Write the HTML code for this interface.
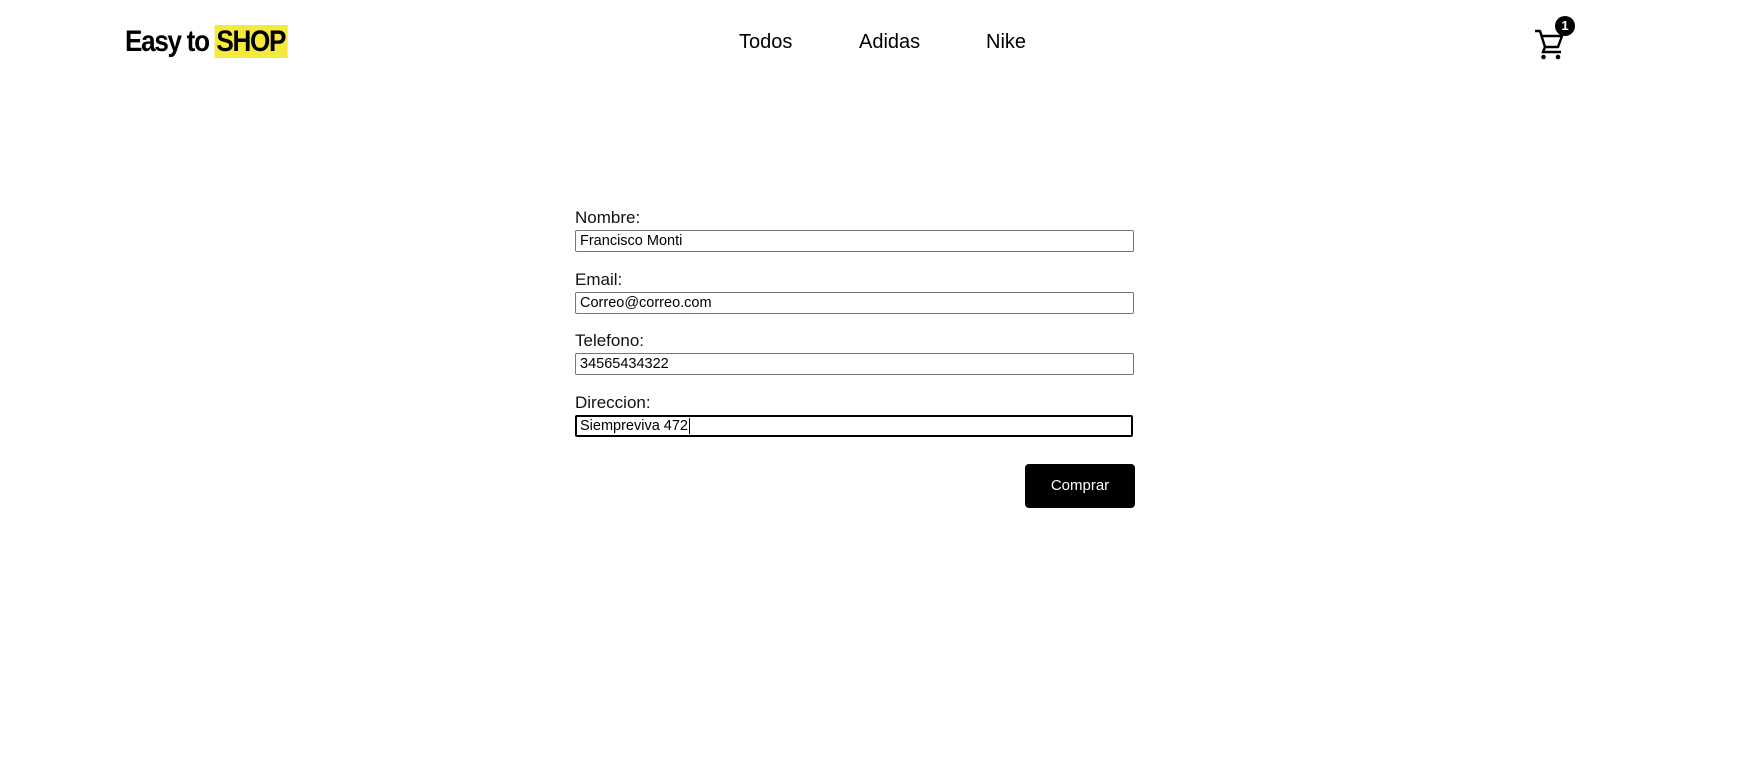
<!DOCTYPE html>
<html><head><meta charset="utf-8"><style>
body{margin:0;width:1760px;height:774px;background:#fff;font-family:"Liberation Sans",sans-serif;color:#000;position:relative;overflow:hidden}
.logo{position:absolute;left:125px;top:25px;font-weight:bold;font-size:30px;line-height:34px;letter-spacing:-1.5px;white-space:nowrap;transform:scaleX(0.87);transform-origin:left center}
.logo span{background:#f5ea3c;padding:0 3px 0 2px}
.nav{position:absolute;top:31px;font-size:20px}
.lbl{position:absolute;left:575px;font-size:17px;color:#111}
.inp{position:absolute;left:575px;width:553px;height:20px;border:1px solid #767676;border-radius:2px;font-size:14.5px;line-height:20px;padding-left:4px;box-sizing:content-box}
.btn{position:absolute;left:1025px;top:464px;width:110px;height:44px;background:#000;color:#fff;border-radius:4px;font-size:15px;text-align:center;line-height:44px}
</style></head><body>
<div class="logo">Easy to <span>SHOP</span></div>
<div class="nav" style="left:739px">Todos</div>
<div class="nav" style="left:859px">Adidas</div>
<div class="nav" style="left:986px">Nike</div>
<svg style="position:absolute;left:1532px;top:27px" width="36" height="34" viewBox="0 0 36 34">
<path d="M3 4h5l5 16h13l4-11H10" fill="none" stroke="#000" stroke-width="2.4" stroke-linejoin="round"/>
<path d="M13 20l-2 5h18" fill="none" stroke="#000" stroke-width="2.4"/>
<circle cx="11.5" cy="30" r="2.3"/><circle cx="26" cy="30" r="2.3"/>
</svg>
<div style="position:absolute;left:1555px;top:16px;width:20px;height:20px;border-radius:50%;background:#000;color:#fff;font-size:13px;font-weight:bold;text-align:center;line-height:20px">1</div>
<div class="lbl" style="top:208px">Nombre:</div>
<div class="inp" style="top:230px">Francisco Monti</div>
<div class="lbl" style="top:270px">Email:</div>
<div class="inp" style="top:292px">Correo@correo.com</div>
<div class="lbl" style="top:331px">Telefono:</div>
<div class="inp" style="top:353px">34565434322</div>
<div class="lbl" style="top:393px">Direccion:</div>
<div class="inp" style="top:415px;border:2px solid #000;width:551px;height:18px;line-height:18px;padding-left:3px">Siempreviva 472<span style="border-left:1px solid #000;margin-left:1px"></span></div>
<div class="btn">Comprar</div>
</body></html>
